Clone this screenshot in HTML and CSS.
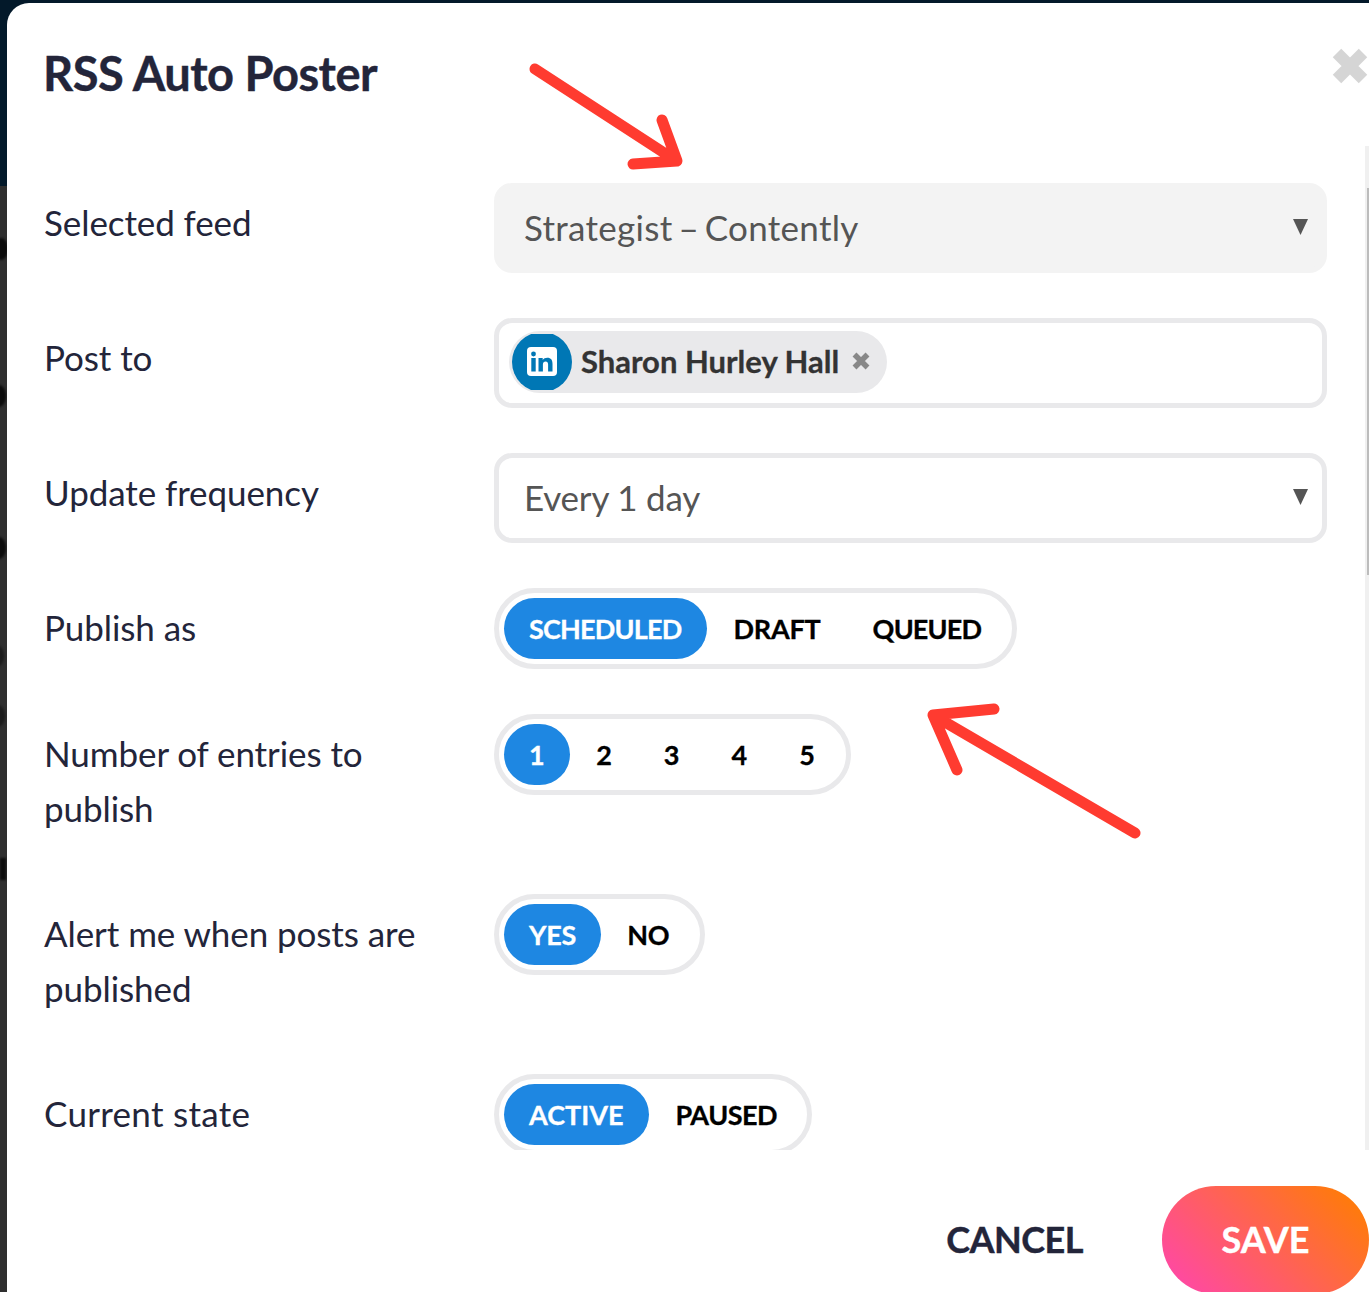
FILE: index.html
```html
<!DOCTYPE html>
<html lang="en">
<head>
<meta charset="utf-8">
<title>RSS Auto Poster</title>
<link rel="stylesheet" href="styles.css">
</head>
<body>
<div class="backdrop-top"></div>
<span class="blob blob-a"></span><span class="blob blob-b"></span><span class="blob blob-c"></span><span class="blob blob-d"></span><span class="blob blob-e"></span><span class="blob blob-f"></span>
<main class="modal">
  <header class="modal-head">
    <h1 class="title">RSS Auto Poster</h1>
    <svg class="close" viewBox="0 0 36 36" aria-label="Close"><path d="M5 5 31 31M31 5 5 31" fill="none" stroke="#d5d5d5" stroke-width="12"/></svg>
  </header>
  <section class="form-area">
    <div class="form">
      <div class="label">Selected feed</div>
      <div class="select select-filled"><span class="feed-name">Strategist – Contently</span><svg class="caret" viewBox="0 0 15 16"><path d="M0 0H15L7.5 16Z" fill="#555"/></svg></div>

      <div class="label">Post to</div>
      <div class="select chips">
        <div class="chip">
          <svg class="chip-logo" viewBox="0 0 60 56">
            <circle cx="30" cy="28" r="30" fill="#0077b5"/>
            <rect x="15" y="13" width="30" height="29" rx="4" fill="#fff"/>
            <circle cx="21.5" cy="20" r="2.4" fill="#0077b5"/>
            <rect x="19.3" y="24" width="4.4" height="13.5" fill="#0077b5"/>
            <path d="M26.5 24H30.700V26C31.700 24.500 33.300 23.700 35.300 23.700 39 23.700 40.500 26 40.500 29.700V37.500H36.100V30.500C36.100 28.500 35.300 27.500 33.600 27.500 31.900 27.500 30.900 28.700 30.900 30.600V37.500H26.500Z" fill="#0077b5"/>
          </svg>
          <span class="chip-name">Sharon Hurley Hall</span>
          <svg class="chip-x" viewBox="0 0 20 20"><path d="M3.500 3.500 16.500 16.500M16.500 3.500 3.500 16.500" fill="none" stroke="#888" stroke-width="5.500"/></svg>
        </div>
      </div>

      <div class="label">Update frequency</div>
      <div class="select"><span class="snug">Every 1 day</span><svg class="caret" viewBox="0 0 15 16"><path d="M0 0H15L7.5 16Z" fill="#555"/></svg></div>

      <div class="label">Publish as</div>
      <div class="toggle"><span class="opt on tight sched">SCHEDULED</span><span class="opt">DRAFT</span><span class="opt tight">QUEUED</span></div>

      <div class="label">Number of entries to publish</div>
      <div class="toggle digits"><span class="opt on">1</span><span class="opt">2</span><span class="opt">3</span><span class="opt">4</span><span class="opt">5</span></div>

      <div class="label">Alert me when posts are published</div>
      <div class="toggle"><span class="opt on">YES</span><span class="opt">NO</span></div>

      <div class="label wide">Current state</div>
      <div class="toggle"><span class="opt on active">ACTIVE</span><span class="opt paused">PAUSED</span></div>
    </div>
    <div class="scrollbar"><div class="thumb"></div></div>
  </section>
  <footer class="modal-foot">
    <span class="cancel">CANCEL</span>
    <span class="save">SAVE</span>
  </footer>
</main>
<svg class="annotation" viewBox="0 0 1369 1292" aria-hidden="true">
  <g fill="none" stroke="#ff3b30" stroke-width="11" stroke-linecap="round" stroke-linejoin="round">
    <path d="M535 69 672 158M662 120 677 161 633 164"/>
    <path d="M1135 833 938 718M994 709 933 715 957 770"/>
  </g>
</svg>
</body>
</html>
```
FILE: styles.css
```css
* { box-sizing: border-box; }
html, body { margin: 0; height: 100%; }
body {
  position: relative;
  width: 1369px;
  height: 1292px;
  overflow: hidden;
  padding: 3px 0 0 7px;
  background: #2f2f2f;
  font-family: Lato, "Liberation Sans", sans-serif;
  color: #23253a;
}
.backdrop-top {
  position: absolute;
  left: 0; top: 0;
  width: 100%;
  height: 186px;
  background: #03192a;
}
.blob {
  position: absolute;
  width: 14px;
  height: 22px;
  border-radius: 50%;
  background: #0c0c0c;
  filter: blur(1px);
}
.blob-a { left: -6px; top: 238px; }
.blob-b { left: -8px; top: 385px; }
.blob-c { left: -8px; top: 537px; }
.blob-d { left: -10px; top: 645px; background: #1c1c1c; }
.blob-e { left: -9px; top: 705px; background: #1c1c1c; }
.blob-f { left: 0; top: 858px; width: 6px; border-radius: 0; }

.modal {
  position: relative;
  display: flex;
  flex-direction: column;
  width: 1362px;
  height: 1289px;
  background: #fff;
  border-radius: 22px 0 0 0;
}
.modal-head {
  flex: none;
  display: flex;
  justify-content: space-between;
  align-items: flex-start;
  height: 143px;
  padding-left: 37px;
}
.title {
  margin: 37px 0 0 -1px;
  font-size: 47px;
  line-height: 67px;
  font-weight: 700;
  letter-spacing: -0.5px;
  -webkit-text-stroke: 0.4px #23253a;
}
.close {
  width: 36px;
  height: 36px;
  margin: 45px 1px 0 0;
}
.form-area {
  flex: none;
  position: relative;
  height: 1004px;
  overflow: hidden;
  padding: 37px 42px 0 37px;
}
.form {
  display: grid;
  grid-template-columns: 450px 1fr;
  row-gap: 45px;
}
.label {
  padding: 12px 30px 13px 0;
  font-size: 35px;
  line-height: 55px;
  font-weight: 400;
  letter-spacing: -0.08px;
}
.label.wide { letter-spacing: 0.3px; }
.select {
  display: flex;
  align-items: center;
  justify-content: space-between;
  height: 90px;
  padding: 0 14px 2px 25px;
  border: 5px solid #e9e9eb;
  border-radius: 18px;
  font-size: 35px;
  color: #555;
}
.snug { letter-spacing: -0.2px; }
.feed-name { letter-spacing: 0.3px; word-spacing: -3.5px; }
.select-filled { background: #f3f3f3; border-color: #f3f3f3; }
.caret { width: 15px; height: 16px; flex: none; }
.chips { padding: 0 0 2px 10px; justify-content: flex-start; }
.chip {
  display: flex;
  align-items: center;
  height: 62px;
  padding: 0 15px 0 3px;
  border-radius: 31px;
  background: #e9e9eb;
}
.chip-logo { width: 60px; height: 56px; flex: none; }
.chip-name {
  margin: -2px 0 0 9px;
  font-size: 31px;
  font-weight: 700;
  color: #333;
  -webkit-text-stroke: 0.3px #333;
}
.chip-x { width: 20px; height: 20px; margin: -3px 1px 0 12px; flex: none; }
.toggle {
  display: flex;
  align-items: center;
  justify-self: start;
  height: 81px;
  padding: 0 5px;
  border: 5px solid #e9e9eb;
  border-radius: 41px;
  font-size: 27px;
  font-weight: 700;
  letter-spacing: -0.2px;
  color: #000;
}
.toggle.digits { letter-spacing: 0; }
.opt {
  display: flex;
  align-items: center;
  height: 61px;
  padding: 0 26px;
  border-radius: 31px;
  -webkit-text-stroke: 0.3px currentColor;
}
.opt.on { background: #1e87e2; color: #fff; padding: 0 25px; }
.opt.on.sched { padding-right: 26px; }
.opt.on.active { letter-spacing: 0; }
.digits .opt.on { margin-right: 0.5px; }
.opt.tight { letter-spacing: -0.8px; }
.opt.paused { letter-spacing: -0.5px; padding: 0 25px 0 27px; }
.scrollbar {
  position: absolute;
  right: 0; top: 0; bottom: 0;
  width: 4px;
  background: #f0f0f0;
}
.thumb {
  width: 2px;
  height: 387px;
  margin: 42px 0 0 2px;
  background: #bcbcbc;
}
.modal-foot {
  flex: none;
  display: flex;
  align-items: flex-start;
  justify-content: flex-end;
  padding-top: 36px;
  font-size: 36px;
  font-weight: 700;
}
.cancel {
  margin: 25px 79px 0 0;
  line-height: 56px;
  letter-spacing: -0.5px;
  -webkit-text-stroke: 0.4px #23253a;
}
.save {
  display: flex;
  align-items: center;
  justify-content: center;
  flex: none;
  width: 207px;
  height: 108px;
  padding-bottom: 2px;
  border-radius: 54px;
  background: linear-gradient(45deg, #ff4a9f 10%, #ff7a0c 90%);
  color: #fff;
  -webkit-text-stroke: 0.4px #fff;
}
.annotation {
  position: absolute;
  left: 0; top: 0;
  width: 1369px;
  height: 1292px;
  pointer-events: none;
}
```
